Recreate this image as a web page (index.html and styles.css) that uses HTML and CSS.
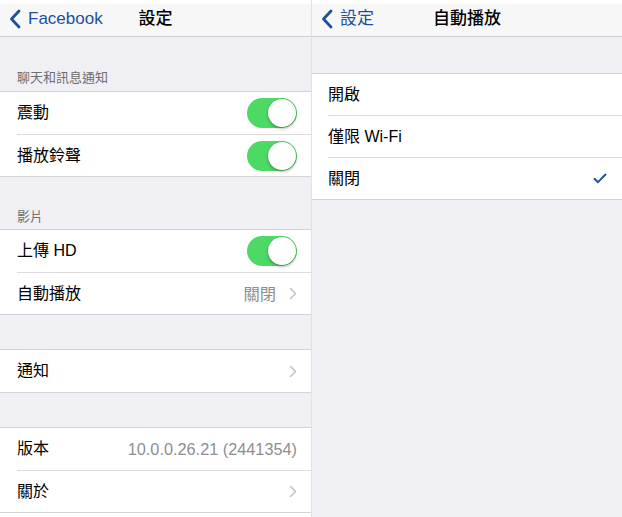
FILE: index.html
```html
<!DOCTYPE html>
<html>
<head>
<meta charset="utf-8">
<link rel="stylesheet" href="styles.css">
</head>
<body>
<div class="screen">
  <section class="panel panel-left">
    <div class="status"></div>
    <header class="nav">
      <div class="back">
        <svg class="back-chev" width="12" height="20" viewBox="0 0 12 20"><path d="M10 2 L2.5 10 L10 18" fill="none" stroke="#1d4f9f" stroke-width="2.8" stroke-linecap="round" stroke-linejoin="round"/></svg>
        <span class="back-text">Facebook</span>
      </div>
      <div class="title">設定</div>
    </header>
    <div class="content">
      <div class="sec-head sec-head-first"><span class="sec-label">聊天和訊息通知</span></div>
      <div class="group">
        <div class="row"><span class="row-label">震動</span><span class="toggle"><span class="knob"></span></span></div>
        <div class="row"><span class="row-label">播放鈴聲</span><span class="toggle"><span class="knob"></span></span></div>
      </div>
      <div class="sec-head"><span class="sec-label">影片</span></div>
      <div class="group">
        <div class="row"><span class="row-label">上傳 HD</span><span class="toggle"><span class="knob"></span></span></div>
        <div class="row"><span class="row-label">自動播放</span><span class="row-right"><span class="value">關閉</span><svg class="chev" width="8" height="13" viewBox="0 0 8 13"><path d="M1.5 1.5 L6.5 6.5 L1.5 11.5" fill="none" stroke="#c3c3c8" stroke-width="1.6" stroke-linecap="round" stroke-linejoin="round"/></svg></span></div>
      </div>
      <div class="gap"></div>
      <div class="group">
        <div class="row"><span class="row-label">通知</span><span class="row-right"><svg class="chev" width="8" height="13" viewBox="0 0 8 13"><path d="M1.5 1.5 L6.5 6.5 L1.5 11.5" fill="none" stroke="#c3c3c8" stroke-width="1.6" stroke-linecap="round" stroke-linejoin="round"/></svg></span></div>
      </div>
      <div class="gap"></div>
      <div class="group">
        <div class="row"><span class="row-label">版本</span><span class="value">10.0.0.26.21 (2441354)</span></div>
        <div class="row"><span class="row-label">關於</span><span class="row-right"><svg class="chev" width="8" height="13" viewBox="0 0 8 13"><path d="M1.5 1.5 L6.5 6.5 L1.5 11.5" fill="none" stroke="#c3c3c8" stroke-width="1.6" stroke-linecap="round" stroke-linejoin="round"/></svg></span></div>
      </div>
      <div class="tail"></div>
    </div>
  </section>
  <section class="panel panel-right">
    <div class="status"></div>
    <header class="nav">
      <div class="back">
        <svg class="back-chev" width="12" height="20" viewBox="0 0 12 20"><path d="M10 2 L2.5 10 L10 18" fill="none" stroke="#1d4f9f" stroke-width="2.8" stroke-linecap="round" stroke-linejoin="round"/></svg>
        <span class="back-text">設定</span>
      </div>
      <div class="title">自動播放</div>
    </header>
    <div class="content content-gray">
      <div class="gap gap-top"></div>
      <div class="group group-right">
        <div class="row row-r"><span class="row-label">開啟</span></div>
        <div class="row row-r"><span class="row-label">僅限 Wi-Fi</span></div>
        <div class="row row-r"><span class="row-label">關閉</span><svg class="check" width="14" height="11" viewBox="0 0 14 11"><path d="M1.5 5.8 L5 9.2 L12.5 1.5" fill="none" stroke="#1d4f9f" stroke-width="1.9" stroke-linecap="round" stroke-linejoin="round"/></svg></div>
      </div>
    </div>
  </section>
</div>
</body>
</html>
```
FILE: styles.css
```css
* { box-sizing: border-box; }
html, body { margin: 0; padding: 0; }
body {
  width: 622px;
  height: 517px;
  overflow: hidden;
  background: #ffffff;
  font-family: "Liberation Sans", "Noto Sans CJK TC", sans-serif;
  color: #000;
}
.screen {
  display: flex;
  width: 622px;
  height: 517px;
}
.panel {
  display: flex;
  flex-direction: column;
  height: 517px;
}
.panel-left {
  width: 312px;
  border-right: 1px solid #e2e2e6;
}
.panel-right {
  flex: 1;
}
.status {
  height: 4px;
  background: #fff;
}
.nav {
  height: 33px;
  padding-bottom: 3px;
  background: #f7f7f8;
  border-bottom: 1px solid #cfcfd3;
  display: grid;
  grid-template-columns: 1fr;
  align-items: center;
  flex-shrink: 0;
}
.nav > * { grid-row: 1; grid-column: 1; }
.back {
  display: flex;
  align-items: center;
  padding-left: 9px;
  gap: 7px;
  color: #1d4f9f;
  font-size: 17px;
  justify-self: start;
}
.back-text { line-height: 20px; }
.title {
  justify-self: center;
  font-size: 17px;
  font-weight: 500;
  line-height: 20px;
}
.content {
  flex: 1;
  background: #efeff4;
  display: flex;
  flex-direction: column;
}
.sec-head {
  height: 52px;
  display: flex;
  align-items: flex-end;
  padding: 0 0 4px 17px;
}
.sec-head-first { height: 54px; padding-bottom: 5px; }
.sec-label {
  font-size: 13px;
  line-height: 16px;
  color: #6d6d72;
}
.group {
  background: #fff;
  border-top: 1px solid #d4d4d8;
  border-bottom: 1px solid #d4d4d8;
  padding-left: 17px;
}
.row {
  height: 42px;
  display: flex;
  align-items: center;
  justify-content: space-between;
  padding-right: 14px;
}
.row + .row { border-top: 1px solid #dcdce0; height: 42px; }
.row-label {
  font-size: 16px;
  line-height: 20px;
}
.row-right {
  display: flex;
  align-items: center;
  gap: 13px;
}
.value {
  font-size: 16.3px;
  color: #8e8e93;
  line-height: 20px;
}
.chev { display: block; }
.toggle {
  width: 50px;
  height: 30px;
  border-radius: 15px;
  background: #4cd964;
  display: flex;
  align-items: center;
  justify-content: flex-end;
  padding-right: 1px;
}
.knob {
  width: 28px;
  height: 28px;
  border-radius: 50%;
  background: #fff;
  box-shadow: 0 0 0 0.5px rgba(0,0,0,0.15), 0 2px 3px rgba(0,0,0,0.25);
}
.gap { height: 34px; }
.gap-top { height: 36px; }
.tail { flex: 1; background: #fff; }
.group-right { padding-left: 16px; }
.row-r { height: 41px; padding-right: 15px; }
.row-r + .row-r { height: 42px; }
.check { display: block; }
```
